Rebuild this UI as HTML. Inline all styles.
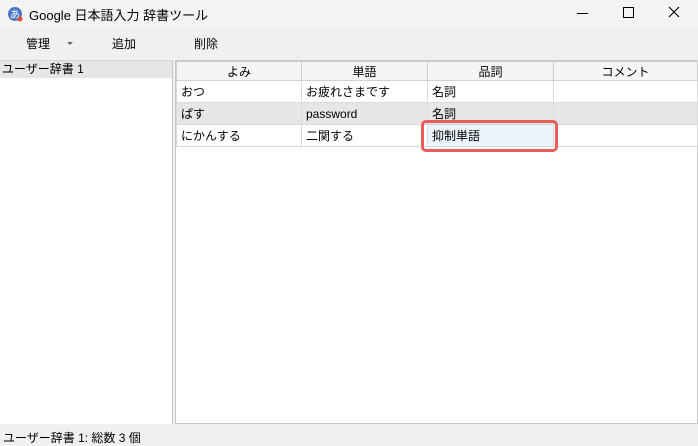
<!DOCTYPE html>
<html><head><meta charset="utf-8"><style>
*{margin:0;padding:0;box-sizing:border-box}
body{width:698px;height:446px;background:#f0f0f0;font-family:"Liberation Sans","Noto Sans CJK JP",sans-serif;font-size:12px;color:#000;position:relative;overflow:hidden}
.abs{position:absolute}
.title{left:0;top:0;width:698px;height:28px;background:#f3f3f3}
.tb{top:30px;height:28px;line-height:28px;font-size:12px}
.left{left:0;top:60px;width:173px;height:364px;background:#fff;border-top:1px solid #d6d6d6;border-right:1px solid #c8c8c8}
.right{left:175px;top:60px;width:523px;height:364px;background:#fff;border:1px solid #c8c8c8}
table{border-collapse:collapse;position:absolute;left:176px;top:61px;table-layout:fixed}
td,th{height:22px;border:1px solid #dadada;font-weight:normal;padding:0 4px;white-space:nowrap;font-size:12px}
th{height:19px;background:#f5f5f5;text-align:center;border-color:#d0d0d0}
tr.g td{background:#e6e6e6}
</style></head><body>
<div class="abs title"></div>
<svg class="abs" style="left:7px;top:6px" width="16" height="16" viewBox="0 0 16 16"><circle cx="8" cy="8" r="7" fill="#4a78c8"/><text x="8" y="12" font-size="10" fill="#fff" text-anchor="middle" font-family="Noto Sans CJK JP">あ</text><circle cx="13" cy="13" r="2.5" fill="#e05030"/></svg>
<div class="abs" style="left:29px;top:5px;font-size:13px">Google 日本語入力 辞書ツール</div>
<div class="abs" style="left:577px;top:13px;width:11px;height:1px;background:#000"></div>
<div class="abs" style="left:623px;top:7px;width:11px;height:11px;border:1px solid #000"></div>
<svg class="abs" style="left:668px;top:6px" width="12" height="12"><path d="M1 1L11 11M11 1L1 11" stroke="#000" stroke-width="1.1"/></svg>
<div class="abs tb" style="left:26px">管理</div>
<div class="abs" style="left:67px;top:42px;width:0;height:0;border-left:3px solid transparent;border-right:3px solid transparent;border-top:3px solid #666"></div>
<div class="abs tb" style="left:112px">追加</div>
<div class="abs tb" style="left:194px">削除</div>
<div class="abs left"><div style="background:#e6e6e6;height:17px;line-height:17px;padding-left:2px">ユーザー辞書 1</div></div>
<div class="abs right"></div>
<table>
<colgroup><col style="width:125px"><col style="width:126px"><col style="width:126px"><col style="width:144px"></colgroup>
<tr><th>よみ</th><th>単語</th><th>品詞</th><th>コメント</th></tr>
<tr><td>おつ</td><td>お疲れさまです</td><td>名詞</td><td></td></tr>
<tr class="g"><td>ぱす</td><td>password</td><td>名詞</td><td></td></tr>
<tr><td>にかんする</td><td>二関する</td><td style="background:#eaf4fc">抑制単語</td><td></td></tr>
</table>
<div class="abs" style="left:421px;top:120px;width:137px;height:32px;border:3px solid #e85c5c;border-radius:5px"></div>
<div class="abs" style="left:3px;top:429px;font-size:12px">ユーザー辞書 1: 総数 3 個</div>
</body></html>
